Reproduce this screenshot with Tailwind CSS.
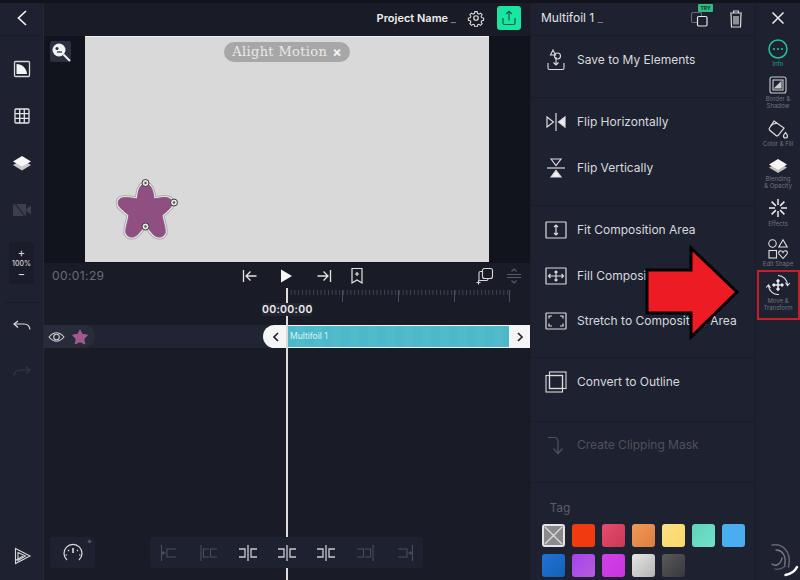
<!DOCTYPE html>
<html>
<head>
<meta charset="utf-8">
<script src="https://cdn.jsdelivr.net/npm/@tailwindcss/browser@4"></script>
</head>
<body class="bg-[#191c27]">
<div class="relative flex w-[800px] h-[580px] overflow-hidden bg-[#191c27] [font-family:Inter,sans-serif]">
  <div class="absolute top-0 left-0 z-30 w-full h-[3px] bg-[#12141c]"></div>

  <!-- left sidebar -->
  <aside class="w-[44px] h-full flex flex-col items-center bg-[#1e2230] border-r border-[#232737]">
    <div class="w-full h-[36px] flex items-center justify-center border-b border-[#1a1d29]">
      <svg width="16" height="20" viewBox="0 0 16 20" fill="none" stroke="#f2f2f2" stroke-width="1.700"><path d="M12 3 L4.500 10 L12 17"/></svg>
    </div>
    <svg class="mt-[23px]" width="20" height="20" viewBox="0 0 20 20"><rect x="2.500" y="2.500" width="15" height="15" rx="1" fill="none" stroke="#d8d8d8" stroke-width="1.300"/><path d="M4.500 5 C10 5 14.500 9 15 15 L4.500 15Z" fill="#f4f4f4"/></svg>
    <svg class="mt-[27px]" width="20" height="20" viewBox="0 0 20 20" fill="none" stroke="#e6e6e6" stroke-width="1.300"><rect x="3" y="3" width="14" height="14" rx="1"/><path d="M7.700 3V17M12.300 3V17M3 7.700H17M3 12.300H17"/></svg>
    <svg class="mt-[27px]" width="20" height="20" viewBox="0 0 20 20"><path d="M1 12 L10 7 L19 12 L10 17.500Z" fill="#c9c9c9"/><path d="M1 8.500 L10 3 L19 8.500 L10 13.500Z" fill="#f6f6f6"/></svg>
    <svg class="mt-[27px]" width="20" height="20" viewBox="0 0 20 20" fill="#3d404b"><rect x="1" y="4" width="13" height="12" rx="1"/><path d="M14.500 8.500 L19 5.500 V14.500 L14.500 11.500Z"/><path d="M3 3.500 L13 16.500" stroke="#1e2230" stroke-width="1.200"/></svg>
    <div class="mt-[22px] w-[25px] h-[42px] rounded-[3px] bg-[#1a1d29] flex flex-col items-center justify-center text-[#d4d5d9]">
      <span class="text-[11px] leading-[10px] font-medium">+</span>
      <span class="text-[7px] leading-[11px] font-medium">100%</span>
      <span class="text-[11px] leading-[10px] font-medium">−</span>
    </div>
    <div class="mt-[18px] w-[36px] h-px bg-[#181b26]"></div>
    <svg class="mt-[13px]" width="20" height="20" viewBox="0 0 20 20" fill="none" stroke="#dedede" stroke-width="1.200"><path d="M6 5 L2 8 L6 11.500"/><path d="M2 8 H12 C15.500 8 17.500 10 18 13.500"/></svg>
    <svg class="mt-[26px]" width="20" height="20" viewBox="0 0 20 20" fill="none" stroke="#343846" stroke-width="1.200"><path d="M14 5 L18 8 L14 11.500"/><path d="M18 8 H8 C4.500 8 2.500 10 2 13.500"/></svg>
    <svg class="mt-auto mb-[14px]" width="20" height="20" viewBox="0 0 20 20" fill="none" stroke="#d8d8d8" stroke-width="1.100"><path d="M3.500 2.500 L18 10 L3.500 17.500Z"/><path d="M6 6.500 L13.500 10 L6 14.500Z"/><path d="M3.500 14.500 L11 10"/></svg>
  </aside>

  <!-- centre -->
  <main class="w-[486px] h-full flex flex-col relative">
    <header class="h-[36px] flex items-center justify-end pr-[9px] bg-[#191c27]">
      <span class="text-[11px] font-semibold text-[#eeeeee] whitespace-nowrap">Project Name <span class="text-[#777b86]">_</span></span>
      <svg class="ml-[11px]" width="18" height="18" viewBox="0 0 24 24" fill="none" stroke="#dcdcdc" stroke-width="1.600"><circle cx="12" cy="12" r="3"/><path d="M10.300 2.500h3.400l.6 2.800 2 .9 2.400-1.500 2.400 2.400-1.500 2.400.9 2 2.800.6v3.400l-2.800.6-.9 2-0 0 1.500 2.400-2.400 2.400-2.400-1.500-2 .9-.6 2.800h-3.400l-.6-2.800-2-.9-2.400 1.500-2.400-2.400 1.500-2.400-.9-2-2.800-.6v-3.400l2.800-.6.9-2-1.500-2.400 2.400-2.400 2.400 1.500 2-.9z" transform="translate(1.200 1.200) scale(.9)"/></svg>
      <div class="ml-[12px] w-[24px] h-[24px] rounded-[3px] bg-[#19e6a0] flex items-center justify-center">
        <svg width="16" height="16" viewBox="0 0 16 16" fill="none" stroke="#0f5f50" stroke-width="1.200"><path d="M8 10.500V1.500M5 4 L8 1.200 L11 4"/><path d="M2 8 V13 Q2 14.500 3.500 14.500 H12.500 Q14 14.500 14 13 V8"/></svg>
      </div>
    </header>

    <section class="h-[227px] bg-[#12141d] pl-[41px] relative">
      <div class="absolute left-[6px] top-[5px] w-[21px] h-[21px] rounded-[2px] bg-[#2b2f3f] flex items-center justify-center">
        <svg width="20" height="20" viewBox="0 0 20 20" fill="none"><circle cx="8" cy="8" r="6.500" fill="#f2f2f2"/><circle cx="6" cy="6.500" r="1.500" fill="#2b2f3f"/><path d="M6 10H11" stroke="#2b2f3f" stroke-width="1.300"/><path d="M12.500 12.500 L19 19" stroke="#f2f2f2" stroke-width="2"/></svg>
      </div>
      <div class="relative w-[404px] h-[226px] bg-[#d9d9d9] border-t border-[#efefef]">
        <div class="absolute left-[139px] top-[5px] w-[126px] h-[20px] rounded-full bg-[#a7a7a7] flex items-center justify-center gap-[5px] text-[#e9e9e9]">
          <span class="[font-family:'DejaVu_Serif',serif] text-[13px] tracking-[0.35px]">Alight Motion</span><span class="font-bold text-[14px] leading-[14px] text-[#f2f2f2]">×</span>
        </div>
        <svg class="absolute left-[25px] top-[136px]" width="70" height="70" viewBox="0 0 70 70" fill="none">
          <g transform="translate(-110 -173)">
            <path d="M137.500 199 C138 190 140 184 145.500 184 C151 184 153 190 154 199 C160 198 165 197 168 198 C173 199 173 206 169 209 C167 211 165 213 162 215 C163 222 166 229 165 233 C163 238 158 238 154 235 C151 232 148 228 145.500 225 C143 228 140 232 137 235 C133 238 128 238 126 233 C125 229 128 222 129 215 C126 213 124 211 122 209 C117 206 117 199 122 198 C125 197 131 198 137.500 199Z" fill="#8f4f81" stroke="#a3a3a7" stroke-width="5" stroke-linejoin="round"/>
            <path d="M137.500 199 C138 190 140 184 145.500 184 C151 184 153 190 154 199 C160 198 165 197 168 198 C173 199 173 206 169 209 C167 211 165 213 162 215 C163 222 166 229 165 233 C163 238 158 238 154 235 C151 232 148 228 145.500 225 C143 228 140 232 137 235 C133 238 128 238 126 233 C125 229 128 222 129 215 C126 213 124 211 122 209 C117 206 117 199 122 198 C125 197 131 198 137.500 199Z" fill="#8f4f81" stroke="#e0e0e0" stroke-width="3.500" stroke-linejoin="round"/>
            <path d="M137.500 199 C138 190 140 184 145.500 184 C151 184 153 190 154 199 C160 198 165 197 168 198 C173 199 173 206 169 209 C167 211 165 213 162 215 C163 222 166 229 165 233 C163 238 158 238 154 235 C151 232 148 228 145.500 225 C143 228 140 232 137 235 C133 238 128 238 126 233 C125 229 128 222 129 215 C126 213 124 211 122 209 C117 206 117 199 122 198 C125 197 131 198 137.500 199Z" fill="#8f4f81" stroke="#8f4f81" stroke-width="1" stroke-linejoin="round"/>
          </g>
          <g stroke="#3a3a3a" stroke-width="1" fill="#e6e6e6">
            <circle cx="35.500" cy="10" r="3.500"/><circle cx="64" cy="29.500" r="3.500"/><circle cx="35.500" cy="53.500" r="3.500"/>
          </g>
          <g fill="#555"><circle cx="35.500" cy="10" r="1.200"/><circle cx="64" cy="29.500" r="1.200"/><circle cx="35.500" cy="53.500" r="1.200"/></g>
        </svg>
      </div>
    </section>

    <div class="h-[27px] flex items-center pl-[8px] pb-[1px]">
      <span class="w-[188px] text-[12px] text-[#686c77] tracking-[0.4px]">00:01:29</span>
      <svg width="20" height="20" viewBox="0 0 20 20" fill="none" stroke="#e4e4e4" stroke-width="1.300"><path d="M3.500 4V16M16.500 10H6M10.500 5.500 L6 10 L10.500 14.500"/></svg>
      <svg class="ml-[16px]" width="20" height="20" viewBox="0 0 20 20" fill="#f6f6f6"><path d="M5 3.500 L16 10 L5 16.500Z"/></svg>
      <svg class="ml-[18px]" width="20" height="20" viewBox="0 0 20 20" fill="none" stroke="#e4e4e4" stroke-width="1.300"><path d="M16.500 4V16M3.500 10H14M9.500 5.500 L14 10 L9.500 14.500"/></svg>
      <svg class="ml-[13px]" width="20" height="20" viewBox="0 0 20 20" fill="none" stroke="#e4e4e4" stroke-width="1.200"><path d="M5 2.500H15V17 L10 14 L5 17Z"/><path d="M10 6V10M8 8H12"/></svg>
      <svg class="ml-[108px]" width="20" height="20" viewBox="0 0 20 20" fill="none" stroke="#d8d8d8" stroke-width="1.100"><rect x="7.500" y="2.500" width="10" height="10" rx="2"/><path d="M7.500 5.500H5.500Q4 5.500 4 7V14.500H11.500Q13 14.500 13 13V12.500"/><path d="M1.500 16.500H5.500M3.500 14.500V18.500"/></svg>
      <svg class="ml-[9px]" width="20" height="20" viewBox="0 0 20 20" fill="none" stroke="#565a66" stroke-width="1.200"><path d="M3 8.500H17M3 11.500H17M7.500 5.500 L10 3 L12.500 5.500M7.500 14.500 L10 17 L12.500 14.500"/></svg>
    </div>

    <!-- ruler -->
    <div class="h-[13px] pl-[243px]">
      <svg width="224" height="13" viewBox="0 0 224 13">
        <defs><pattern id="ticks" x="0" y="0" width="3.730" height="13" patternUnits="userSpaceOnUse"><rect x="0" y="0" width="1" height="5" fill="#3f434f"/></pattern></defs>
        <rect width="224" height="5" fill="url(#ticks)"/>
        <g fill="#4a4e5a"><rect x="55" y="0" width="1" height="12"/><rect x="111" y="0" width="1" height="12"/><rect x="167" y="0" width="1" height="12"/><rect x="222" y="0" width="1" height="12"/></g>
      </svg>
    </div>
    <div class="h-[13px] pl-[218px] mb-[9px]">
      <span class="relative z-10 block w-[50px] text-center rounded-[2px] bg-[#232632] text-[10.500px] leading-[13px] font-semibold text-[#ececec] tracking-[0.3px]">00:00:00</span>
    </div>

    <!-- track -->
    <div class="h-[23px] bg-[#212533] flex items-center">
      <div class="w-[51px] h-full rounded-r-full bg-[#272b3a] flex items-center pl-[4px] gap-[7px]">
        <svg width="17" height="12" viewBox="0 0 17 12" fill="none" stroke="#d2d3d8" stroke-width="1.100"><path d="M1 6 Q8.500 -2.500 16 6 Q8.500 14.500 1 6Z"/><circle cx="8.500" cy="6" r="2.800"/></svg>
        <svg width="16" height="16" viewBox="0 0 16 16"><polygon points="8,1.500 10,5.500 15,6.300 11.500,9.800 12.500,14.500 8,12.300 3.500,14.500 4.500,9.800 1,6.300 6,5.500" fill="#a3588f" stroke="#a3588f" stroke-width="1.500" stroke-linejoin="round"/></svg>
      </div>
      <div class="ml-[168px] w-[267px] h-full rounded-l-full rounded-r-[5px] bg-[#f5f5f5] flex items-center">
        <div class="w-[24px] flex justify-center pl-[2px]"><svg width="8" height="10" viewBox="0 0 8 10" fill="none" stroke="#23262f" stroke-width="1.700"><path d="M6 1 L2 5 L6 9"/></svg></div>
        <div class="w-[222px] h-[21px] flex items-center pl-[3px] text-[8.500px] text-[#d9f3f5] bg-[repeating-linear-gradient(90deg,#4db8c9_0px,#4db8c9_9px,#51bbcb_9px,#51bbcb_18px)]">Multifoil 1</div>
        <div class="w-[21px] flex justify-center"><svg width="8" height="10" viewBox="0 0 8 10" fill="none" stroke="#23262f" stroke-width="1.700"><path d="M2 1 L6 5 L2 9"/></svg></div>
      </div>
    </div>

    <!-- bottom tools -->
    <div class="mt-auto mb-[12px] flex relative z-10">
      <div class="ml-[6px] w-[45px] h-[31px] rounded-[3px] bg-[#1e2230] relative flex items-center justify-center">
        <svg width="22" height="20" viewBox="0 0 22 20" fill="none" stroke="#dcdcdc" stroke-width="1.200"><path d="M5 17 A9 9 0 1 1 17 17"/><path d="M11 5V10" stroke-width="1.600"/><path d="M5 12H3.500M17 12H18.500M6 7 L7 8M16 7 L15 8"/></svg>
        <span class="absolute right-[4px] top-[3px] w-[3px] h-[3px] bg-[#555a66] rotate-45"></span>
      </div>
      <div class="ml-[55px] w-[273px] h-[31px] rounded-[3px] bg-[#1e2230] flex">
        <div class="w-[39px] flex items-center justify-center"><svg width="20" height="20" viewBox="0 0 20 20" fill="none" stroke="#4a4e5a" stroke-width="1.100"><path d="M1.500 2V18M2 10H6M4 8.500 L2.500 10 L4 11.500M16 6H7V14H16"/></svg></div>
        <div class="w-[39px] flex items-center justify-center"><svg width="20" height="20" viewBox="0 0 20 20" fill="none" stroke="#4a4e5a" stroke-width="1.100"><path d="M2 2V18M10 6H4.500V14H10M18 6H11.500V14H18"/></svg></div>
        <div class="w-[39px] flex items-center justify-center"><svg width="20" height="20" viewBox="0 0 20 20" fill="none" stroke="#c9cad0" stroke-width="1.300"><path d="M10 2V18M1 6H7V14H1M19 6H13V14H19"/></svg></div>
        <div class="w-[39px] flex items-center justify-center"><svg width="20" height="20" viewBox="0 0 20 20" fill="none" stroke="#c9cad0" stroke-width="1.300"><path d="M10 2V18M1 6H7V14H1M19 6H13V14H19"/></svg></div>
        <div class="w-[39px] flex items-center justify-center"><svg width="20" height="20" viewBox="0 0 20 20" fill="none" stroke="#c9cad0" stroke-width="1.300"><path d="M10 2V18M1 6H7V14H1M19 6H13V14H19"/></svg></div>
        <div class="w-[39px] flex items-center justify-center"><svg width="20" height="20" viewBox="0 0 20 20" fill="none" stroke="#4a4e5a" stroke-width="1.100"><path d="M18 2V18M10 6H15.500V14H10M2 6H8.500V14H2"/></svg></div>
        <div class="w-[39px] flex items-center justify-center"><svg width="20" height="20" viewBox="0 0 20 20" fill="none" stroke="#4a4e5a" stroke-width="1.100"><path d="M18.500 2V18M18 10H14M16 8.500 L17.500 10 L16 11.500M4 6H13V14H4"/></svg></div>
      </div>
    </div>

    <!-- playhead -->
    <div class="absolute left-[242px] top-[288px] bottom-0 w-[2px] bg-[#dcdcdc] z-[5]"></div>
  </main>

  <!-- properties panel -->
  <section class="w-[225px] h-full flex flex-col bg-[#1e2230] text-[12px] text-[#d8d9de] border-l border-[#1a1d29]">
    <div class="h-[36px] shrink-0 flex items-center pl-[10px] border-b border-[#1a1d29] relative">
      <span class="text-[12px] text-[#e4e4e6] whitespace-nowrap">Multifoil 1 <span class="text-[#777b86]">_</span></span>
      <svg class="absolute left-[159px] top-[9px]" width="20" height="20" viewBox="0 0 20 20" fill="none"><rect x="1.500" y="3.500" width="10" height="10" rx="1.500" stroke="#676b77" stroke-width="1.100"/><rect x="7.500" y="7.500" width="9.500" height="9.500" rx="1.200" fill="#1e2230" stroke="#e6e6e6" stroke-width="1.200"/></svg>
      <span class="absolute left-[167px] top-[4px] w-[15px] h-[8px] rounded-[1px] bg-[#2fbc7f] text-[5px] leading-[8px] font-bold text-center text-[#0f3a2a]">TRY</span>
      <svg class="absolute left-[196px] top-[9px]" width="18" height="20" viewBox="0 0 18 20" fill="none" stroke="#dcdcdc" stroke-width="1.200"><path d="M3 4H15M6.500 4V2H11.500V4"/><path d="M4 4.500 L4.500 18H13.500 L14 4.500"/><path d="M7 7V15.500M9 7V15.500M11 7V15.500"/></svg>
    </div>

    <div class="h-[62px] shrink-0 pt-px border-b border-[#1a1d29]">
      <div class="h-[46px] flex items-center pl-[13px] gap-[9px]">
        <svg width="24" height="24" viewBox="0 0 24 24" fill="none" stroke="#dcdcdc" stroke-width="1.100"><circle cx="13.500" cy="8" r="3"/><path d="M9 2 L6.500 7 H11.500Z"/><path d="M12 9V17M9.500 14.500 L12 17 L14.500 14.500"/><path d="M4 15V20Q4 21.500 5.500 21.500H18.500Q20 21.500 20 20V15"/></svg>
        <span>Save to My Elements</span>
      </div>
    </div>

    <div class="h-[108px] shrink-0 pt-px border-b border-[#1a1d29]">
      <div class="h-[46px] flex items-center pl-[13px] gap-[9px]">
        <svg width="24" height="24" viewBox="0 0 24 24" fill="none" stroke="#dcdcdc" stroke-width="1.200"><path d="M12 3V21"/><path d="M3 7 L9.500 12 L3 17Z"/><path d="M21 7 L14.500 12 L21 17Z" fill="#efefef"/></svg>
        <span>Flip Horizontally</span>
      </div>
      <div class="h-[46px] flex items-center pl-[13px] gap-[9px]">
        <svg width="24" height="24" viewBox="0 0 24 24" fill="none" stroke="#dcdcdc" stroke-width="1.200"><path d="M3 12H21"/><path d="M7 3 L12 9.500 L17 3Z"/><path d="M7 21 L12 14.500 L17 21Z" fill="#efefef"/></svg>
        <span>Flip Vertically</span>
      </div>
    </div>

    <div class="h-[152px] shrink-0 pt-px border-b border-[#1a1d29]">
      <div class="h-[46px] flex items-center pl-[13px] gap-[9px]">
        <svg width="24" height="24" viewBox="0 0 24 24" fill="none" stroke="#dcdcdc" stroke-width="1.200"><rect x="2" y="4" width="20" height="16" rx=".5"/><path d="M12 7V17M10 9 L12 7 L14 9M10 15 L12 17 L14 15"/></svg>
        <span>Fit Composition Area</span>
      </div>
      <div class="h-[45px] flex items-center pl-[13px] gap-[9px]">
        <svg width="24" height="24" viewBox="0 0 24 24" fill="none" stroke="#dcdcdc" stroke-width="1.200"><rect x="2" y="4" width="20" height="16" rx=".5"/><path d="M4.500 12H19.500M12 7V17M6.500 10 L4.500 12 L6.500 14M17.500 10 L19.500 12 L17.500 14M10.500 8.500 L12 7 L13.500 8.500M10.500 15.500 L12 17 L13.500 15.500"/></svg>
        <span>Fill Composition Area</span>
      </div>
      <div class="h-[45px] flex items-center pl-[13px] gap-[9px]">
        <svg width="24" height="24" viewBox="0 0 24 24" fill="none" stroke="#dcdcdc" stroke-width="1.200"><rect x="2" y="4" width="20" height="16" rx=".5"/><path d="M5 9.500V7H8M16 7H19V9.500M5 14.500V17H8M16 17H19V14.500"/></svg>
        <span class="whitespace-nowrap">Stretch to Composition Area</span>
      </div>
    </div>

    <div class="h-[64px] shrink-0 pt-px border-b border-[#1a1d29]">
      <div class="h-[46px] flex items-center pl-[13px] gap-[9px]">
        <svg width="24" height="24" viewBox="0 0 24 24" fill="none" stroke="#dcdcdc" stroke-width="1.100"><rect x="2" y="5.500" width="16.500" height="16.500"/><rect x="5.500" y="2" width="16.500" height="16.500"/><rect x="5.500" y="5.500" width="13" height="13" stroke-width="1.300"/></svg>
        <span>Convert to Outline</span>
      </div>
    </div>

    <div class="h-[61px] shrink-0 border-b border-[#1a1d29]">
      <div class="h-[46px] flex items-center pl-[13px] gap-[9px] text-[#4d515d]">
        <svg width="24" height="24" viewBox="0 0 24 24" fill="none" stroke="#4d515d" stroke-width="1.200"><path d="M4 4.500H10Q14 4.500 14 9V20M9.500 15.500 L14 20.500 L18.500 15.500"/></svg>
        <span>Create Clipping Mask</span>
      </div>
    </div>

    <div class="pl-[10.500px] pt-[17px]">
      <div class="pl-[8px] text-[12px] leading-[15px] text-[#595d69]">Tag</div>
      <div class="mt-[9px] grid grid-cols-[repeat(7,23px)] gap-[7px]">
        <div class="w-[23px] h-[23px] rounded-[3px] border-2 border-[#e4e4e4] bg-[#8a8a8d] flex items-center justify-center">
          <svg width="19" height="19" viewBox="0 0 19 19" stroke="#dedede" stroke-width="1.100"><path d="M1 1 L18 18M18 1 L1 18"/></svg>
        </div>
        <div class="w-[23px] h-[23px] rounded-[3px] bg-[#f03a10]"></div>
        <div class="w-[23px] h-[23px] rounded-[3px] bg-gradient-to-br from-[#e84a6c] to-[#c93a58]"></div>
        <div class="w-[23px] h-[23px] rounded-[3px] bg-gradient-to-br from-[#ee9a58] to-[#df7c3e]"></div>
        <div class="w-[23px] h-[23px] rounded-[3px] bg-gradient-to-br from-[#fbe183] to-[#f9d767]"></div>
        <div class="w-[23px] h-[23px] rounded-[3px] bg-gradient-to-br from-[#5fd3b8] to-[#74e0cb]"></div>
        <div class="w-[23px] h-[23px] rounded-[3px] bg-[#48aef0]"></div>
        <div class="w-[23px] h-[23px] rounded-[3px] bg-gradient-to-br from-[#1f74d6] to-[#1560b6]"></div>
        <div class="w-[23px] h-[23px] rounded-[3px] bg-gradient-to-br from-[#a840ea] to-[#b45ce0]"></div>
        <div class="w-[23px] h-[23px] rounded-[3px] bg-gradient-to-br from-[#d33fe8] to-[#c536dc]"></div>
        <div class="w-[23px] h-[23px] rounded-[3px] bg-gradient-to-br from-[#e6e6e6] to-[#b4b4b4]"></div>
        <div class="w-[23px] h-[23px] rounded-[3px] bg-gradient-to-br from-[#5a5a5c] to-[#37383c]"></div>
      </div>
    </div>
  </section>

  <!-- right toolbar -->
  <aside class="w-[45px] h-full flex flex-col items-center bg-[#1e2230] border-l border-[#1a1d29] text-[6px] leading-[7px] text-center text-[#6e727d] whitespace-nowrap">
    <div class="h-[36px] w-full shrink-0 flex items-center justify-center">
      <svg width="14" height="14" viewBox="0 0 14 14" stroke="#ececec" stroke-width="1.500"><path d="M1.500 1.500 L12.500 12.500M12.500 1.500 L1.500 12.500"/></svg>
    </div>
    <svg class="mt-[3px]" width="20" height="20" viewBox="0 0 20 20" fill="none"><circle cx="10" cy="10" r="9" stroke="#25c29a" stroke-width="1.500"/><g fill="#25c29a"><circle cx="6" cy="10" r="1.100"/><circle cx="10" cy="10" r="1.100"/><circle cx="14" cy="10" r="1.100"/></g></svg>
    <span class="mt-[1px] text-[#25a583]">Info</span>

    <svg class="mt-[9px]" width="18" height="18" viewBox="0 0 18 18" fill="none" stroke="#c9cad0" stroke-width="1.100"><rect x="1" y="1" width="16" height="16" rx="2"/><rect x="4" y="4" width="10" height="10"/><path d="M6 12 L12 6 V12Z" fill="#c9cad0"/></svg>
    <span class="mt-[1px]">Border &amp;<br>Shadow</span>

    <svg class="mt-[10px]" width="20" height="20" viewBox="0 0 20 20" fill="none" stroke="#dedede" stroke-width="1.200"><path d="M6 2 L16 9 L10 16.500 Q9 17.500 8 16.500 L1.500 11 Q.800 10 1.500 9Z"/><path d="M3 7 Q5 4 9 4.500"/><path d="M17.500 13.500 Q15.500 16 15.500 17 A2 2 0 0 0 19.500 17 Q19.500 16 17.500 13.500Z"/></svg>
    <span class="mt-[1px]">Color &amp; Fill</span>

    <svg class="mt-[10px]" width="20" height="18" viewBox="0 0 20 18"><path d="M1 10.500 L10 5.500 L19 10.500 L10 16Z" fill="#bdbdbd"/><path d="M1 7.500 L10 2 L19 7.500 L10 13Z" fill="#f4f4f4"/></svg>
    <span>Blending<br>&amp; Opacity</span>

    <svg class="mt-[9px]" width="20" height="20" viewBox="0 0 20 20" stroke="#ececec" stroke-width="1.500"><path d="M10 1V7M10 13V19M1 10H7M13 10H19M3.600 3.600 L7.900 7.900M12.100 12.100 L16.400 16.400M16.400 3.600 L12.100 7.900M7.900 12.100 L3.600 16.400"/></svg>
    <span class="mt-[2px]">Effects</span>

    <svg class="mt-[11px]" width="22" height="22" viewBox="0 0 22 22" fill="none" stroke="#e0e0e0" stroke-width="1.100"><circle cx="5.500" cy="5.500" r="3.700"/><path d="M16 1.800 L20.200 9 H11.800Z"/><rect x="2" y="12.500" width="7.500" height="7.500"/><path d="M16 20.500 L12 16 Q11 13 13.500 12.800 Q15.200 12.800 16 14.500 Q16.800 12.800 18.500 12.800 Q21 13 20 16Z"/></svg>
    <span>Edit Shape</span>

    <div class="mt-[3px] w-[43px] h-[50px] shrink-0 border-2 border-[#c4202c] flex flex-col items-center pt-px">
      <svg width="26" height="24" viewBox="0 0 26 24" fill="none" stroke="#e8e8e8" stroke-width="1.100"><path d="M13 7V17M8 12H18M11.500 8.500 L13 7 L14.500 8.500M11.500 15.500 L13 17 L14.500 15.500M9.500 10.500 L8 12 L9.500 13.500M16.500 10.500 L18 12 L16.500 13.500" stroke-width="1.600"/><path d="M13 2.500 A9.500 9.500 0 0 1 22.500 12"/><path d="M20.500 9.500 L22.500 12.500 L24.800 10"/><path d="M3.500 13 A9.500 9.500 0 0 0 14 21.500"/><path d="M5.500 15 L3.500 12 L1.200 14.500"/></svg>
      <span>Move &amp;<br>Transform</span>
    </div>

    <svg class="mt-auto self-end shrink-0" width="38" height="40" viewBox="0 0 38 40" fill="none" stroke-linecap="round">
      <path d="M10 5 C20 3 30 11 26.500 27" stroke="#62656e" stroke-width="1.500"/>
      <path d="M14 10 C20 10 25 16 22.500 25" stroke="#7a7d86" stroke-width="1.300"/>
      <path d="M10 24 C14 27 19 24 20 18" stroke="#7a7d86" stroke-width="1.300"/>
      <path d="M13 29 C17 30 21 28 23.500 26" stroke="#62656e" stroke-width="1.200"/>
      <path d="M23.500 35 C29 34 33 31 35 27" stroke="#f6f6f6" stroke-width="2.500"/>
    </svg>
  </aside>

  <!-- annotation arrow -->
  <svg class="absolute left-0 top-0 z-40 pointer-events-none" width="800" height="580" viewBox="0 0 800 580"><polygon points="647,270 691,270 691,248 737,292 691,337 691,313 647,313" fill="#ed1c24" stroke="#000" stroke-width="3"/></svg>
</div>
</body>
</html>
